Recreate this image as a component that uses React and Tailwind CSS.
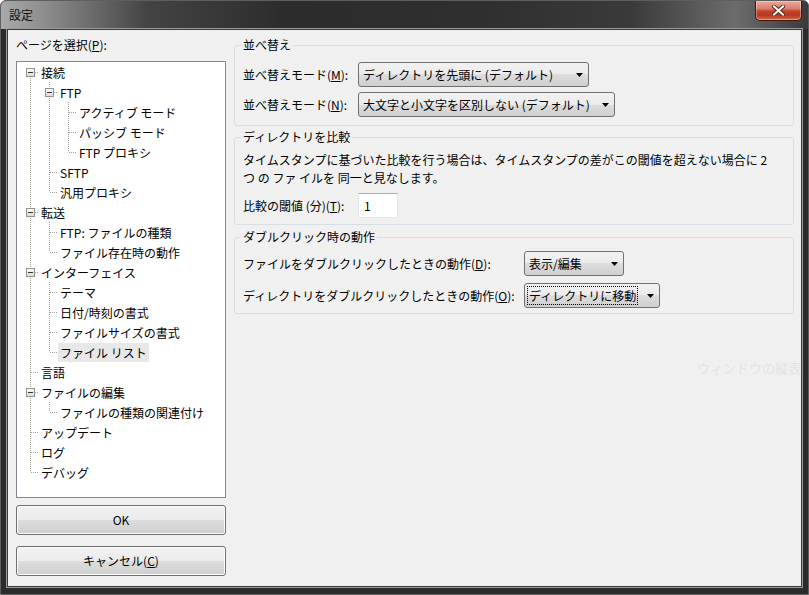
import React from 'react';

const tree = [
  {
    t: '接続',
    c: [
      { t: 'FTP', c: [{ t: 'アクティブ モード' }, { t: 'パッシブ モード' }, { t: 'FTP プロキシ' }] },
      { t: 'SFTP' },
      { t: '汎用プロキシ' },
    ],
  },
  { t: '転送', c: [{ t: 'FTP: ファイルの種類' }, { t: 'ファイル存在時の動作' }] },
  {
    t: 'インターフェイス',
    c: [{ t: 'テーマ' }, { t: '日付/時刻の書式' }, { t: 'ファイルサイズの書式' }, { t: 'ファイル リスト', sel: true }],
  },
  { t: '言語' },
  { t: 'ファイルの編集', c: [{ t: 'ファイルの種類の関連付け' }] },
  { t: 'アップデート' },
  { t: 'ログ' },
  { t: 'デバッグ' },
];

// flatten the tree into rows, keeping track of which ancestor lines continue
function flatten(nodes, level = 0, anc = []) {
  const rows = [];
  nodes.forEach((n, i) => {
    const last = i === nodes.length - 1;
    rows.push({ label: n.t, sel: n.sel, level, anc, last, first: level === 0 && i === 0, exp: !!n.c });
    if (n.c) rows.push(...flatten(n.c, level + 1, [...anc, !last]));
  });
  return rows;
}

const rows = flatten(tree);
const dot = { stroke: '#a0a0a0', strokeWidth: 1, strokeDasharray: '1 1' };

const TreeRow = ({ row }) => (
  <div className="flex items-center h-[20px]">
    {row.anc.map((on, k) => (
      <svg key={k} width="19" height="20" className="shrink-0">
        {on && <line x1="13.5" y1="0" x2="13.5" y2="20" style={dot} />}
      </svg>
    ))}
    <svg width="22" height="20" className="shrink-0">
      {!row.first && <line x1="13.5" y1="0" x2="13.5" y2="10" style={dot} />}
      {!row.last && <line x1="13.5" y1="10" x2="13.5" y2="20" style={dot} />}
      <line x1={row.exp ? 18 : 14} y1="10.5" x2="22" y2="10.5" style={dot} />
      {row.exp && (
        <>
          <defs>
            <linearGradient id="box" x1="0" y1="0" x2="0" y2="1">
              <stop offset="0" stopColor="#ffffff" />
              <stop offset="1" stopColor="#d8d8d8" />
            </linearGradient>
          </defs>
          <rect x="9.5" y="6.5" width="8" height="8" fill="url(#box)" stroke="#919191" />
          <line x1="11" y1="10.5" x2="16" y2="10.5" stroke="#333" strokeWidth="1" />
        </>
      )}
    </svg>
    <span className={`px-[2px] leading-[19px] whitespace-nowrap ${row.sel ? 'bg-[#e8e8e8]' : ''}`}>{row.label}</span>
  </div>
);

const Arrow = () => (
  <svg width="7" height="4" className="shrink-0">
    <path d="M0 0 H7 L3.5 4 Z" fill="#000" />
  </svg>
);

const Combo = ({ w, children, focus }) => (
  <div
    className={`flex items-center h-[25px] border border-[#707070] rounded-[3px] bg-[linear-gradient(to_bottom,#f2f2f2_0%,#ebebeb_50%,#dddddd_50%,#cfcfcf_100%)] pr-[5px] ${w}`}
  >
    {focus ? (
      <span className="ml-[2px] mr-[9px] px-[1px] flex-1 leading-[17px] border border-dotted border-black whitespace-nowrap">
        {children}
      </span>
    ) : (
      <span className="pl-[4px] flex-1 whitespace-nowrap leading-[16px]">{children}</span>
    )}
    <Arrow />
  </div>
);

const Btn = ({ children }) => (
  <div className="h-[30px] flex items-center justify-center border border-[#707070] rounded-[3px] bg-[linear-gradient(to_bottom,#f2f2f2_0%,#ebebeb_50%,#dddddd_50%,#cfcfcf_100%)] shadow-[inset_0_0_0_1px_#fcfcfc]">
    {children}
  </div>
);

export default function App() {
  return (
    <div className="w-[809px] h-[595px] flex flex-col bg-[#2b2b2b] border border-[#5e5e5e] rounded-t-[6px] overflow-hidden text-[12px] text-black font-['Noto_Sans_CJK_JP','Noto_Sans',sans-serif]">
      {/* title bar */}
      <div className="h-[28px] flex items-start justify-between bg-[linear-gradient(to_right,#a9a9a9_0%,#8a8a8a_6%,#444_18%,#2c2c2c_35%,#2f2f2f_60%,#3a3a3a_78%,#6c6c6c_91%,#3a3a3a_100%)]">
        <span className="ml-[8px] mt-[6px] leading-[16px] text-[#111]">設定</span>
        <div className="mr-[6px] w-[47px] h-[20px] flex items-center justify-center border border-[#4a1408] border-t-0 rounded-b-[5px] bg-[linear-gradient(to_bottom,#e9a898_0%,#d98070_40%,#c5452c_52%,#b53a21_75%,#d36a4d_100%)] shadow-[inset_0_0_0_1px_rgba(255,255,255,0.35)]">
          <svg width="13" height="11" viewBox="0 0 13 11">
            <path
              d="M2 1.5 L6.5 5.5 L11 1.5 M2 9.5 L6.5 5.5 L11 9.5"
              fill="none"
              stroke="#5a2a20"
              strokeWidth="4"
              strokeLinecap="square"
            />
            <path
              d="M2 1.5 L6.5 5.5 L11 1.5 M2 9.5 L6.5 5.5 L11 9.5"
              fill="none"
              stroke="#ffffff"
              strokeWidth="2"
              strokeLinecap="square"
            />
          </svg>
        </div>
      </div>

      {/* client area */}
      <div className="flex-1 flex px-[6px] pb-[7px]">
        <div className="relative flex-1 flex gap-[8px] pl-[8px] pr-[7px] pt-[7px] bg-[#f0f0f0] border border-[#3a3a3a] shadow-[0_0_0_1px_#9c9c9c] overflow-hidden">
          {/* left column */}
          <div className="w-[210px] shrink-0 flex flex-col">
            <div className="leading-[16px] mb-[8px]">
              ページを選択(<u>P</u>):
            </div>
            <div className="h-[437px] border border-[#828790] bg-white">
              {rows.map((r, i) => (
                <TreeRow key={i} row={r} />
              ))}
            </div>
            <div className="mt-[7px]">
              <Btn>OK</Btn>
            </div>
            <div className="mt-[11px]">
              <Btn>
                キャンセル(<u>C</u>)
              </Btn>
            </div>
          </div>

          {/* right column */}
          <div className="flex-1 flex flex-col">
            <fieldset className="border border-[#d5dfe5] rounded-[3px] px-[8px] pb-[8px]">
              <legend className="ml-[-2px] px-[2px] leading-[16px]">並べ替え</legend>
              <div className="mt-[9px] grid grid-cols-[115px_auto] gap-y-[5px] items-center justify-start">
                <span className="whitespace-nowrap">
                  並べ替えモード(<u>M</u>):
                </span>
                <Combo w="w-[231px]">ディレクトリを先頭に (デフォルト)</Combo>
                <span className="whitespace-nowrap">
                  並べ替えモード(<u>N</u>):
                </span>
                <Combo w="w-[257px]">大文字と小文字を区別しない (デフォルト)</Combo>
              </div>
            </fieldset>

            <fieldset className="mt-[3px] border border-[#d5dfe5] rounded-[3px] px-[8px] pb-[6px]">
              <legend className="ml-[-2px] px-[2px] leading-[16px]">ディレクトリを比較</legend>
              <div className="mt-[6px] leading-[18px] whitespace-nowrap">
                タイムスタンプに基づいた比較を行う場合は、タイムスタンプの差がこの閾値を超えない場合に 2
                <br />
                つ の ファ イルを 同一と見なします。
              </div>
              <div className="mt-[6px] grid grid-cols-[115px_auto] items-center justify-start">
                <span className="whitespace-nowrap">
                  比較の閾値 (分)(<u>T</u>):
                </span>
                <div className="w-[40px] h-[25px] flex items-center pl-[5px] bg-white border border-[#e3e9ef] border-t-[#abadb3]">
                  1
                </div>
              </div>
            </fieldset>

            <fieldset className="mt-[4px] border border-[#d5dfe5] rounded-[3px] px-[8px] pb-[5px]">
              <legend className="ml-[-2px] px-[2px] leading-[16px]">ダブルクリック時の動作</legend>
              <div className="mt-[6px] grid grid-cols-[281px_auto] gap-y-[7px] items-center justify-start">
                <span className="whitespace-nowrap">
                  ファイルをダブルクリックしたときの動作(<u>D</u>):
                </span>
                <Combo w="w-[100px]">表示/編集</Combo>
                <span className="whitespace-nowrap">
                  ディレクトリをダブルクリックしたときの動作(<u>O</u>):
                </span>
                <Combo w="w-[136px]" focus>
                  ディレクトリに移動
                </Combo>
              </div>
            </fieldset>
          </div>

          {/* faint overlay text */}
          <span className="absolute left-[689px] top-[330px] leading-[16px] text-[13px] whitespace-nowrap text-[#e3e3e3]">
            ウィンドウの縦表示
          </span>
        </div>
      </div>
    </div>
  );
}
